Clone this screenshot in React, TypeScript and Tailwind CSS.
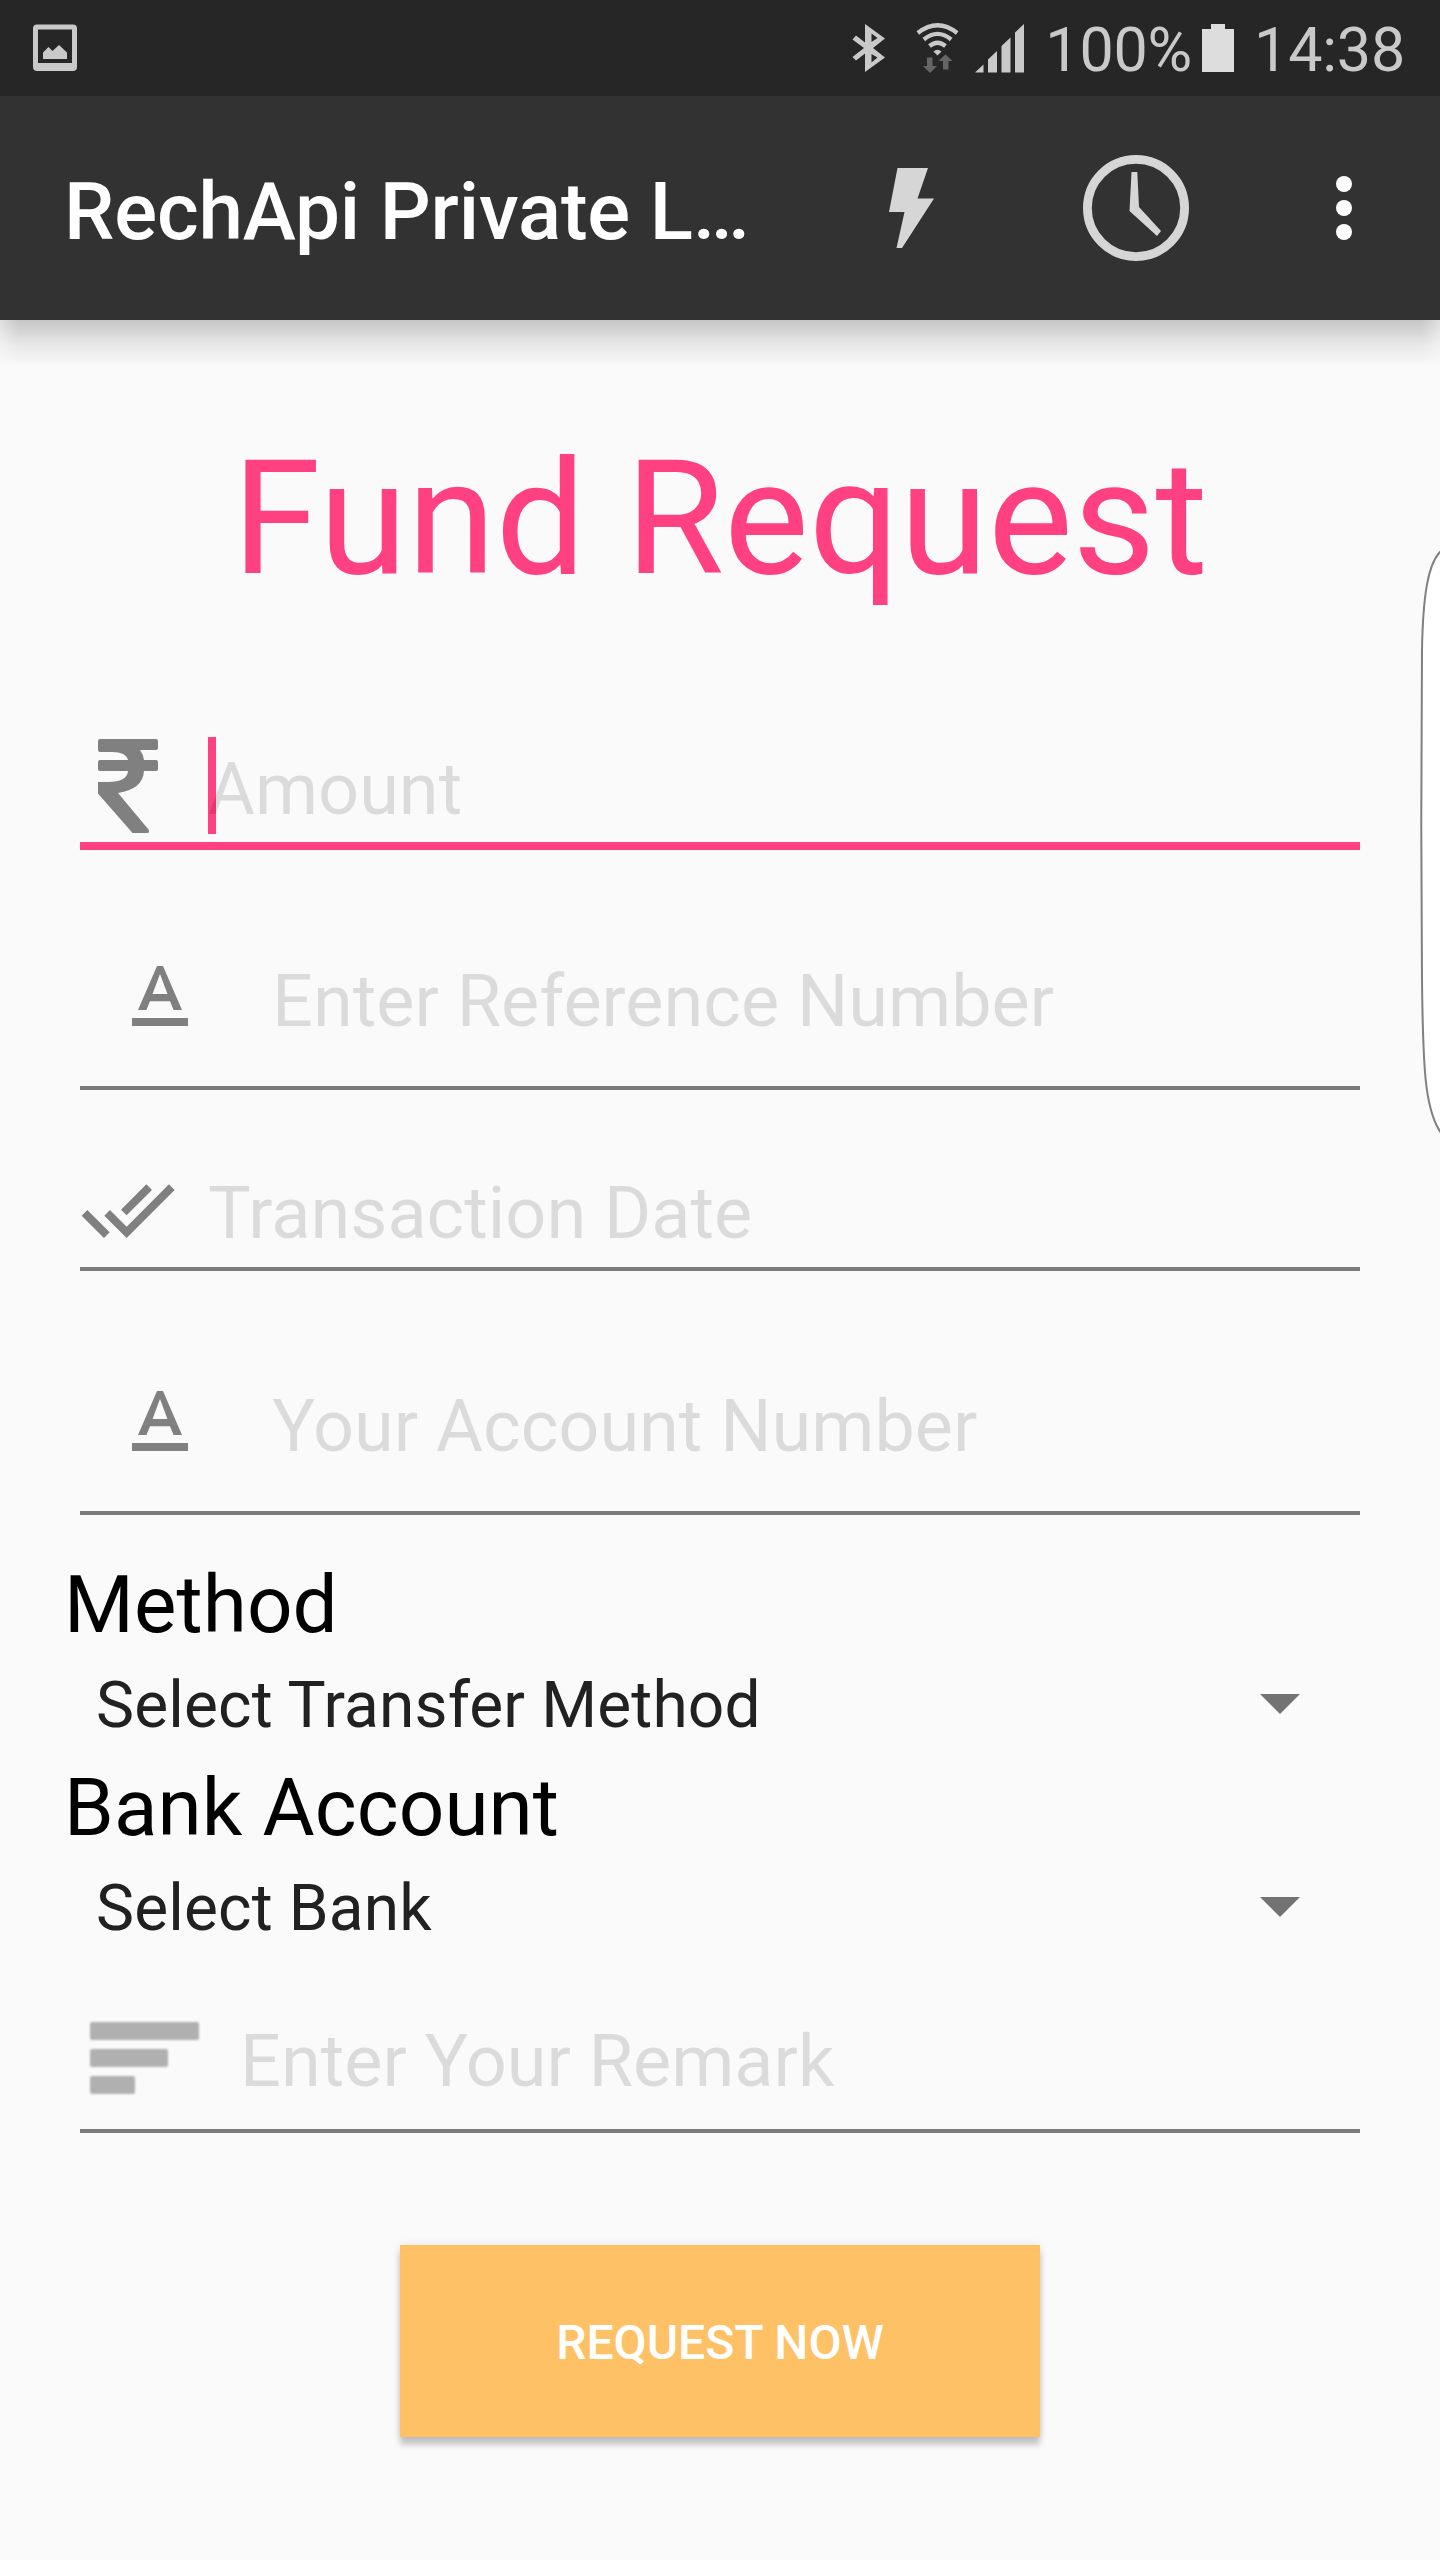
import type { ReactNode } from "react"
import { MdDoneAll, MdTextFormat } from "react-icons/md"

type FieldProps = {
  icon: ReactNode
  placeholder: string
  className: string
  focused?: boolean
}

type SpinnerProps = {
  label: string
  value: string
}

function StatusBar() {
  return (
    <div className="flex h-24 items-center justify-between bg-[#262626] pr-[35px] pl-[33px] text-[#c9c9c9]">
      <svg width="44" height="48" viewBox="0 0 44 48" fill="currentColor">
        <path
          fillRule="evenodd"
          d="M4 0.5H40Q44 0.5 44 4.5V43Q44 47 40 47H4Q0 47 0 43V4.5Q0 0.5 4 0.5ZM5 5.5V39H39V5.5Z"
        />
        <path d="M10 35V28.5L15.5 23L19.5 27L26 21L34 28.5V35Z" />
      </svg>

      <div className="flex items-center">
        <svg width="34" height="48" viewBox="0 0 34 48" fill="currentColor">
          <path
            fillRule="evenodd"
            d="M13 0L33 14.5L21 24L33 33.5L13 48V29.5L4 36.5L0.5 33L12 24L0.5 15.5L4 11.5L13 18.5ZM19.5 9.5V18L25.5 14ZM19.5 30V38.5L25.5 33.5Z"
          />
        </svg>

        <svg className="ml-[30px]" width="44" height="50" viewBox="0 0 44 50">
          <g fill="none" stroke="#c9c9c9" strokeWidth="4.2">
            <path d="M1.8 10Q21.5-5.5 41.2 10" />
            <path d="M7.8 16.5Q21.5 5.3 35.2 16.5" />
            <path d="M13.5 23Q21.5 16.5 29.5 23" />
          </g>
          <path d="M17.5 28.5Q21.5 25 25.5 28.5L21.5 32.5Z" fill="#c9c9c9" />
          <path d="M11 34.5H16.5V43H21L14 50L7 43H11Z" fill="#666666" />
          <path d="M27 46.5V38H22.5L29.5 31.5L36.5 38H32.5V46.5Z" fill="#666666" />
        </svg>

        <svg className="ml-[15px]" width="49" height="49" viewBox="0 0 49 49" fill="currentColor">
          <path d="M0 48.5L8.5 40.5V48.5ZM13 48.5V35.5L22 27V48.5ZM26.5 48.5V22L35.5 13.5V48.5ZM40 48.5V8.5L49 0V48.5Z" />
        </svg>

        <span className="ml-[21px] pt-[3px] text-[61px] leading-[72px] tracking-[-0.2px]">100%</span>

        <svg className="ml-[10px]" width="32" height="48" viewBox="0 0 32 48">
          <path d="M9 0H23V5H32V48H0V5H9Z" fill="#dddddd" />
        </svg>

        <span className="ml-5 pt-[3px] text-[61px] leading-[72px] tracking-[-0.2px]">14:38</span>
      </div>
    </div>
  )
}

function AppBar() {
  return (
    <header className="relative flex h-56 items-center bg-[#323232] pr-[88px] pl-16">
      <h1 className="flex-1 pt-2 text-[80px] leading-[94px] font-medium tracking-[-0.16px] text-white">
        RechApi Private L…
      </h1>
      <svg width="46" height="80" viewBox="0 0 46 80">
        <path d="M8.5 0H39L28.5 30.5H45L13 80H7.5L15.5 44H0Z" fill="#d6d6d6" />
      </svg>
      <svg className="ml-[148px]" width="106" height="106" viewBox="0 0 106 106">
        <circle cx="53" cy="53" r="48.6" fill="none" stroke="#d6d6d6" strokeWidth="8.8" />
        <path d="M48.5 17H54.3L56 52L78 76L74 81L46.5 56Z" fill="#d6d6d6" />
      </svg>
      <svg className="ml-[147px]" width="16" height="64" viewBox="0 0 16 64" fill="#ffffff">
        <circle cx="8" cy="8" r="8" />
        <circle cx="8" cy="32" r="8" />
        <circle cx="8" cy="56" r="8" />
      </svg>
      <div className="absolute top-full left-0 h-[46px] w-full bg-linear-to-b from-black/21 via-black/8 to-transparent [mask-image:linear-gradient(to_right,rgba(0,0,0,0.5),black_18px,black_1422px,rgba(0,0,0,0.5))]" />
    </header>
  )
}

function RupeeIcon() {
  return (
    <svg className="mr-[50px] ml-[18px]" width="60" height="94" viewBox="0 0 60 94" fill="#808080">
      <path d="M2 0H58Q60 0 60 2V9Q60 11 58 11H42Q45 15 46 21H58Q60 21 60 23V30Q60 32 58 32H46Q45 50 20 54L50.5 90.5Q52 94 49 94H34.5L0 54.5V43H10Q29 43 30 32H2Q0 32 0 30V23Q0 21 2 21H30Q28 13 14 13H2Q0 13 0 11V2Q0 0 2 0Z" />
    </svg>
  )
}

function RemarkIcon() {
  return (
    <div className="mr-[41px] ml-[10px] flex flex-col gap-[9px] blur-[1px]">
      <div className="h-[18px] w-[109px] rounded-xs bg-[#b0b0b0]" />
      <div className="h-[18px] w-[78px] rounded-xs bg-[#b0b0b0]" />
      <div className="h-[18px] w-[45px] rounded-xs bg-[#b0b0b0]" />
    </div>
  )
}

function Field({ icon, placeholder, className, focused }: FieldProps) {
  return (
    <div
      className={`mx-4 flex items-center box-content ${
        focused ? "border-b-8 border-[#ff4081]" : "border-b-4 border-[#7b7b7b]"
      } ${className}`}
    >
      {icon}
      <div className="relative">
        {focused && <div className="absolute -top-[3px] left-0 h-[97px] w-2 bg-[#ff4081]" />}
        <span className="relative block pt-2 text-[72px] leading-[84px] text-black/12">
          {placeholder}
        </span>
      </div>
    </div>
  )
}

function Spinner({ label, value }: SpinnerProps) {
  return (
    <div>
      <div className="pt-0.5 text-[80px] leading-[92px] tracking-[0.1px] text-black">{label}</div>
      <div className="flex h-[109px] items-center justify-between pr-[76px] pl-8">
        <span className="text-[64px] leading-[75px] tracking-[0.14px] text-[#212121]">{value}</span>
        <svg className="-mt-[3px]" width="40" height="20" viewBox="0 0 40 20">
          <path d="M0 0H40L20 20Z" fill="#737373" />
        </svg>
      </div>
    </div>
  )
}

export default function App() {
  return (
    <div className="relative h-[2560px] w-[1440px] overflow-hidden bg-[#fafafa] font-[Roboto,sans-serif]">
      <StatusBar />
      <AppBar />

      <main className="flex flex-col px-16 pt-[105px]">
        <h2 className="text-center text-[160px] leading-[188px] text-[#ff4081]">Fund Request</h2>

        <Field icon={<RupeeIcon />} placeholder="Amount" className="mt-[116px] h-[113px]" focused />
        <Field
          icon={<MdTextFormat className="mr-16 ml-8 size-24 text-[#808080]" />}
          placeholder="Enter Reference Number"
          className="mt-[60px] h-44"
        />
        <Field
          icon={<MdDoneAll className="mr-8 size-24 text-[#808080]" />}
          placeholder="Transaction Date"
          className="mt-[63px] h-[114px]"
        />
        <Field
          icon={<MdTextFormat className="mr-16 ml-8 size-24 text-[#808080]" />}
          placeholder="Your Account Number"
          className="mt-16 mb-[42px] h-44"
        />

        <Spinner label="Method" value="Select Transfer Method" />
        <Spinner label="Bank Account" value="Select Bank" />

        <Field icon={<RemarkIcon />} placeholder="Enter Your Remark" className="mt-[23px] h-[143px]" />

        <button className="mt-[112px] h-48 w-[640px] self-center bg-[#ffc166] pt-[3px] text-[48px] font-medium text-white shadow-[0_8px_6px_rgba(0,0,0,0.2),0_0_8px_rgba(0,0,0,0.1)]">
          REQUEST NOW
        </button>
      </main>

      {/* edge panel handle */}
      <svg className="absolute top-[540px] right-0" width="20" height="600" viewBox="0 0 20 600">
        <path
          d="M21 11C8 23 3 55 2 110C1 170 1 360 2 440C3 530 5 570 21 593"
          fill="#ffffff"
          stroke="#808080"
          strokeWidth="2"
        />
      </svg>
    </div>
  )
}
